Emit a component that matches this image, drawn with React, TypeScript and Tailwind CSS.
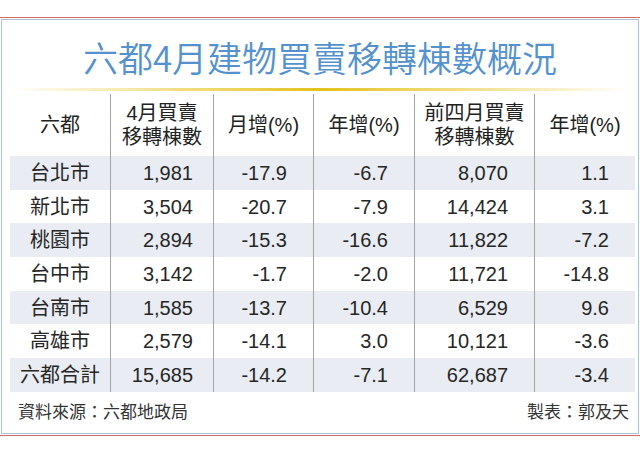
import React from "react";

const rows: [string, string, string, string, string, string][] = [
  ["台北市", "1,981", "-17.9", "-6.7", "8,070", "1.1"],
  ["新北市", "3,504", "-20.7", "-7.9", "14,424", "3.1"],
  ["桃園市", "2,894", "-15.3", "-16.6", "11,822", "-7.2"],
  ["台中市", "3,142", "-1.7", "-2.0", "11,721", "-14.8"],
  ["台南市", "1,585", "-13.7", "-10.4", "6,529", "9.6"],
  ["高雄市", "2,579", "-14.1", "3.0", "10,121", "-3.6"],
  ["六都合計", "15,685", "-14.2", "-7.1", "62,687", "-3.4"],
];

const font = { fontFamily: '"Liberation Sans", "Noto Sans CJK TC", sans-serif' };

export default function App() {
  return (
    <div className="w-[640px] h-[460px] bg-white pt-[17px] text-[#262626]" style={font}>
      <div className="h-px bg-[#d26a6a]" />
      <div className="mt-[1px] mx-[1px] border border-[#aac2d8] h-[415px] flex flex-col">
        <div className="h-[68px] flex items-center justify-center">
          <div className="text-[35px] leading-none font-[350] text-[#5592cd] pt-[4px]" style={{ fontFamily: '"Noto Sans CJK TC", "Liberation Sans", sans-serif' }}>
            六都4月建物買賣移轉棟數概況
          </div>
        </div>
        <div className="mx-[8px] h-[3px] bg-gradient-to-r from-transparent via-[#e5c21e] to-transparent" />
        <div className="ml-[8px] w-[625px] grid grid-cols-[100px_103px_100px_101px_120px_101px] mt-[3px]">
          {[
            ["六都"],
            ["4月買賣", "移轉棟數"],
            ["月增(%)"],
            ["年增(%)"],
            ["前四月買賣", "移轉棟數"],
            ["年增(%)"],
          ].map((h, i) => (
            <div
              key={i}
              className={`h-[62px] flex flex-col items-center justify-center text-[20px] leading-[24px] text-[#222] ${i > 0 ? "border-l border-[#a3a3a3]" : ""}`}
            >
              {h.map((l, j) => (
                <div key={j}>{l}</div>
              ))}
            </div>
          ))}
        </div>
        <div className="ml-[8px] w-[625px] flex flex-col">
          {rows.map((r, ri) => (
            <div
              key={ri}
              className={`grid grid-cols-[100px_103px_100px_101px_120px_101px] h-[33.7px] ${ri % 2 === 0 ? "bg-[#e9edf3]" : "bg-white"}`}
            >
              {r.map((c, ci) => (
                <div
                  key={ci}
                  className={`flex items-center text-[20px] leading-none ${ci === 0 ? "justify-center" : "justify-end border-l border-[#a3a3a3]"} ${ci === 1 ? "pr-[20px]" : ci > 1 ? "pr-[26px]" : ""}`}
                >
                  {c}
                </div>
              ))}
            </div>
          ))}
        </div>
        <div className="flex-1 flex items-center justify-between pl-[16px] pr-[9px] text-[17px] leading-none text-[#333]">
          <span>資料來源：六都地政局</span>
          <span>製表：郭及天</span>
        </div>
      </div>
      <div className="mt-[1px] h-px bg-[#d26a6a]" />
    </div>
  );
}
